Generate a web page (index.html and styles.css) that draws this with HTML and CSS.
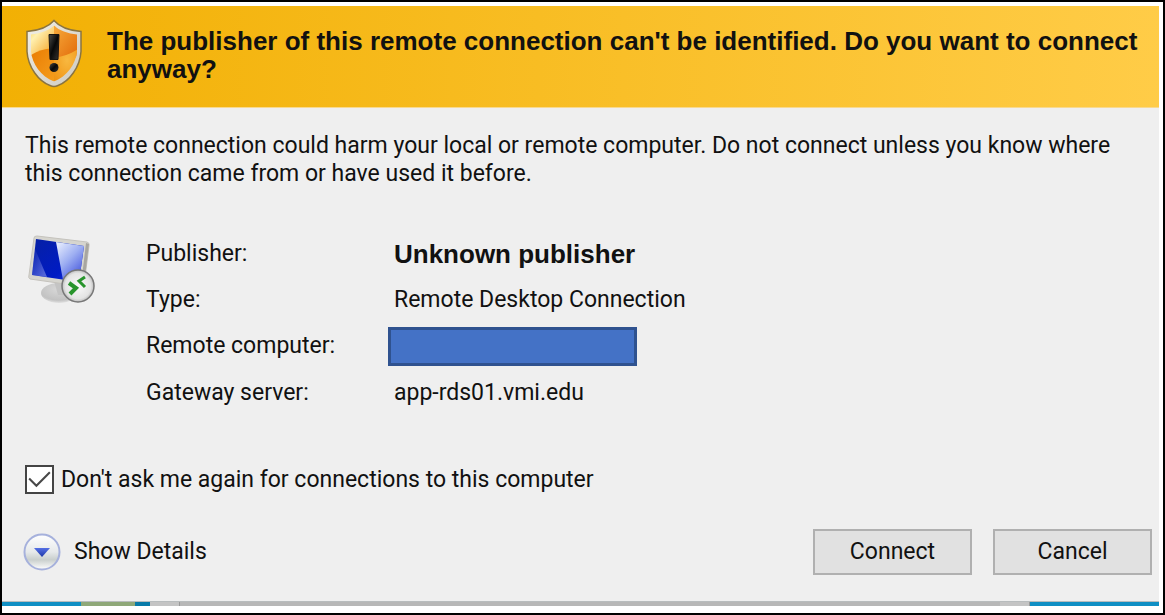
FILE: index.html
```html
<!DOCTYPE html>
<html lang="en">
<head>
<meta charset="utf-8">
<title>Remote Desktop Connection</title>
<link rel="stylesheet" href="styles.css">
</head>
<body>
<div class="frame">
  <main class="dialog">
    <header class="banner">
      <svg class="shield" viewBox="0 0 58 68" aria-hidden="true">
        <defs>
          <linearGradient id="rim" x1="0" y1="0" x2="1" y2="1"><stop offset="0" stop-color="#f4f1e8"/><stop offset=".5" stop-color="#dedbd2"/><stop offset="1" stop-color="#cecbc2"/></linearGradient>
          <linearGradient id="tl" x1="0" y1="0" x2="1" y2="1"><stop offset="0" stop-color="#fbc01c"/><stop offset=".4" stop-color="#fff0b0"/><stop offset="1" stop-color="#f39a10"/></linearGradient>
          <linearGradient id="tr" x1="0" y1="0" x2="1" y2="1"><stop offset="0" stop-color="#f9b040"/><stop offset="1" stop-color="#e06404"/></linearGradient>
          <linearGradient id="bl" x1="0" y1="0" x2="1" y2="1"><stop offset="0" stop-color="#e87800"/><stop offset="1" stop-color="#f6a01e"/></linearGradient>
          <radialGradient id="br" cx=".45" cy=".35" r=".8"><stop offset="0" stop-color="#f8b840"/><stop offset="1" stop-color="#ee8a08"/></radialGradient>
          <linearGradient id="mark" x1="0" y1="0" x2="1" y2="1"><stop offset="0" stop-color="#4c4c48"/><stop offset=".5" stop-color="#080808"/><stop offset="1" stop-color="#383430"/></linearGradient>
          <clipPath id="face"><path d="M29 6C24 11 15 14 6 15V32C7 44 16 57 29 62C42 57 51 44 52 32V15C43 14 34 11 29 6Z"/></clipPath>
        </defs>
        <path d="M29 1C23 8 14 11 2 12V32C3 48 14 62 25 66Q29 68 33 66C44 62 55 48 56 32V12C44 11 35 8 29 1Z" fill="url(#rim)" stroke="#8a7440" stroke-width="1.5"/>
        <g clip-path="url(#face)">
          <path d="M0 0H31V36H0Z" fill="url(#tl)"/>
          <path d="M29 0H58V38H29Z" fill="url(#tr)"/>
          <path d="M0 40Q14 28 29 29V68H0Z" fill="url(#bl)"/>
          <path d="M29 38Q44 37 58 26V68H29Z" fill="url(#br)"/>
        </g>
        <path d="M24 15H34L33 40H25Z" fill="url(#mark)" stroke="#181410"/>
        <circle cx="29" cy="48" r="4.5" fill="url(#mark)"/>
      </svg>
      <h1 class="title">The publisher of this remote connection can't be identified. Do you want to connect anyway?</h1>
    </header>
    <section class="content">
      <p class="warning">This remote connection could harm your local or remote computer. Do not connect unless you know where this connection came from or have used it before.</p>
      <div class="info">
        <svg class="computer" viewBox="0 0 70 72" aria-hidden="true">
          <defs>
            <linearGradient id="dark" x1="0" y1="0" x2="1" y2="1"><stop offset="0" stop-color="#0620a4"/><stop offset=".65" stop-color="#001bc4"/><stop offset="1" stop-color="#2438dc"/></linearGradient>
            <linearGradient id="light" x1="0" y1="0" x2=".7" y2="1"><stop offset="0" stop-color="#eef3ff"/><stop offset=".5" stop-color="#9eaff2"/><stop offset="1" stop-color="#4052dc"/></linearGradient>
            <linearGradient id="glare" x1="0" y1="0" x2="1" y2="1"><stop offset="0" stop-color="#8794e8" stop-opacity="0"/><stop offset="1" stop-color="#8794e8" stop-opacity=".7"/></linearGradient>
            <radialGradient id="base" cx=".5" cy=".3" r=".7"><stop offset="0" stop-color="#d9d9d9"/><stop offset=".8" stop-color="#c2c2c2"/><stop offset="1" stop-color="#e2e2e2"/></radialGradient>
            <radialGradient id="badge"><stop offset="0" stop-color="#fafafa"/><stop offset=".8" stop-color="#e4e4e4"/><stop offset="1" stop-color="#bcbcbc"/></radialGradient>
          </defs>
          <ellipse cx="32" cy="58" rx="18" ry="10" fill="url(#base)"/>
          <path d="M27 46L45 49V60H31Z" fill="#c4c4c4"/>
          <path d="M7 3Q7 1 10 1L60 7Q63 8 62 11L57 50Q56 52 52 51L3 44Q1 43 2 40Z" fill="#d6d5cf" stroke="#c5c3bd"/>
          <path d="M59 8L62 9L57 50L54 50Z" fill="#a8a6a0"/>
          <path d="M9 4L57 11L52 47L5 40Z" fill="url(#dark)"/>
          <path d="M29 7L57 11L52 47L36 45Z" fill="url(#light)"/>
          <path d="M8 14L20 42L5 40Z" fill="url(#glare)"/>
          <circle cx="51" cy="51" r="16" fill="url(#badge)" stroke="#777" stroke-width="1.5"/>
          <path d="M42 48L49 53L43 59" fill="none" stroke="#28942c" stroke-width="4"/>
          <path d="M58 42L52 46L58 52" fill="none" stroke="#28942c" stroke-width="3"/>
        </svg>
        <dl class="details">
          <dt>Publisher:</dt><dd class="strong">Unknown publisher</dd>
          <dt>Type:</dt><dd>Remote Desktop Connection</dd>
          <dt>Remote computer:</dt><dd><span class="redacted"></span></dd>
          <dt>Gateway server:</dt><dd>app-rds01.vmi.edu</dd>
        </dl>
      </div>
      <div class="remember">
        <span class="tick">
          <input class="box" type="checkbox" id="remember" checked>
          <svg class="mark" viewBox="0 0 28 28" aria-hidden="true"><path d="M4 13L11 20L24 7" fill="none" stroke="#484848" stroke-width="2"/></svg>
        </span>
        <label for="remember">Don't ask me again for connections to this computer</label>
      </div>
      <footer class="actions">
        <button class="expand" type="button">
          <svg class="chevron" viewBox="0 0 38 38" aria-hidden="true">
            <defs>
              <linearGradient id="disc" x1="0" y1="0" x2="0" y2="1"><stop offset="0" stop-color="#fff"/><stop offset=".5" stop-color="#e6e9ea"/><stop offset=".72" stop-color="#c9cfcd"/><stop offset="1" stop-color="#fff"/></linearGradient>
              <linearGradient id="arrow" x1="0" y1="0" x2="0" y2="1"><stop offset="0" stop-color="#5570e4"/><stop offset="1" stop-color="#1c36a8"/></linearGradient>
            </defs>
            <circle cx="19" cy="19" r="17.5" fill="url(#disc)" stroke="#a6b1dc" stroke-width="2"/>
            <path d="M11 15H27L19 24Z" fill="url(#arrow)"/>
          </svg>
          <span>Show Details</span>
        </button>
        <button class="button" type="button">Connect</button>
        <button class="button" type="button">Cancel</button>
      </footer>
    </section>
    <div class="backdrop" aria-hidden="true"><span class="blue"></span><span class="green"></span><span class="blue end"></span><span class="gap"></span><span class="gray"></span><span class="gap"></span><span class="blue right"></span></div>
  </main>
</div>
</body>
</html>
```
FILE: styles.css
```css
* { box-sizing: border-box; }
body { margin: 0; background: #fff; color: #111; font: 23px/28px Roboto, "Liberation Sans", sans-serif; }
button { font: inherit; color: inherit; }
.frame { min-height: 100vh; display: flex; border: 2px solid #000; padding: 4px 4px 7px 0; }
.dialog { flex: 1; display: flex; flex-direction: column; background: #efefef; }
.banner { display: flex; gap: 24px; padding: 13px 8px 19px 23px; background: linear-gradient(90deg, #f2b004, #ffcc47); border-bottom: 1px solid #f8d990; }
.shield { flex: none; width: 58px; height: 69px; }
.title { margin: 0; padding-top: 8px; font: 700 26px/28px "Liberation Sans", sans-serif; color: #111; }
.content { flex: 1; display: flex; flex-direction: column; padding: 24px 7px 26px 23px; }
.warning { margin: 0; padding-right: 28px; }
.info { display: flex; gap: 49px; margin-top: 43px; padding-left: 2px; }
.computer { flex: none; width: 70px; height: 72px; margin-top: 4px; }
.details { margin: 0; display: grid; grid-template-columns: 248px auto; grid-template-rows: 46px 46px 46px 48px; align-items: center; }
.details dd { margin: 0; }
.details .strong { font: 700 26px/28px "Liberation Sans", sans-serif; }
.redacted { display: block; width: 249px; height: 39px; margin-left: -6px; background: #4472c6; border: 3px solid #2f528f; }
.remember { display: flex; align-items: center; gap: 7px; margin-top: 48px; }
.tick { display: grid; width: 29px; height: 29px; }
.box, .mark { grid-area: 1 / 1; width: 29px; height: 29px; margin: 0; }
.box { appearance: none; background: #fff; border: 2px solid #444; }
.mark { pointer-events: none; z-index: 1; }
.actions { display: flex; align-items: center; gap: 21px; margin: auto 0 0 -2px; }
.expand { display: flex; align-items: center; gap: 13px; margin-right: auto; padding: 0; border: 0; background: none; }
.chevron { width: 38px; height: 38px; }
.button { width: 159px; height: 46px; padding: 0; background: #e1e1e1; border: 2px solid #b0b0b0; }
.backdrop { display: flex; height: 5px; border-top: 1px solid #b8bcbd; }
.blue { flex: 0 1 79px; background: #0f8fc4; }
.green { flex: 0 1 54px; background: #8fa878; }
.end { flex-basis: 15px; background: #087aa8; }
.gap { flex: 0 1 30px; background: #c4c4c4; border-right: 1px solid #999; }
.gray { flex: 1; background: #b7b7b7; }
.right { flex-basis: 129px; }
```
